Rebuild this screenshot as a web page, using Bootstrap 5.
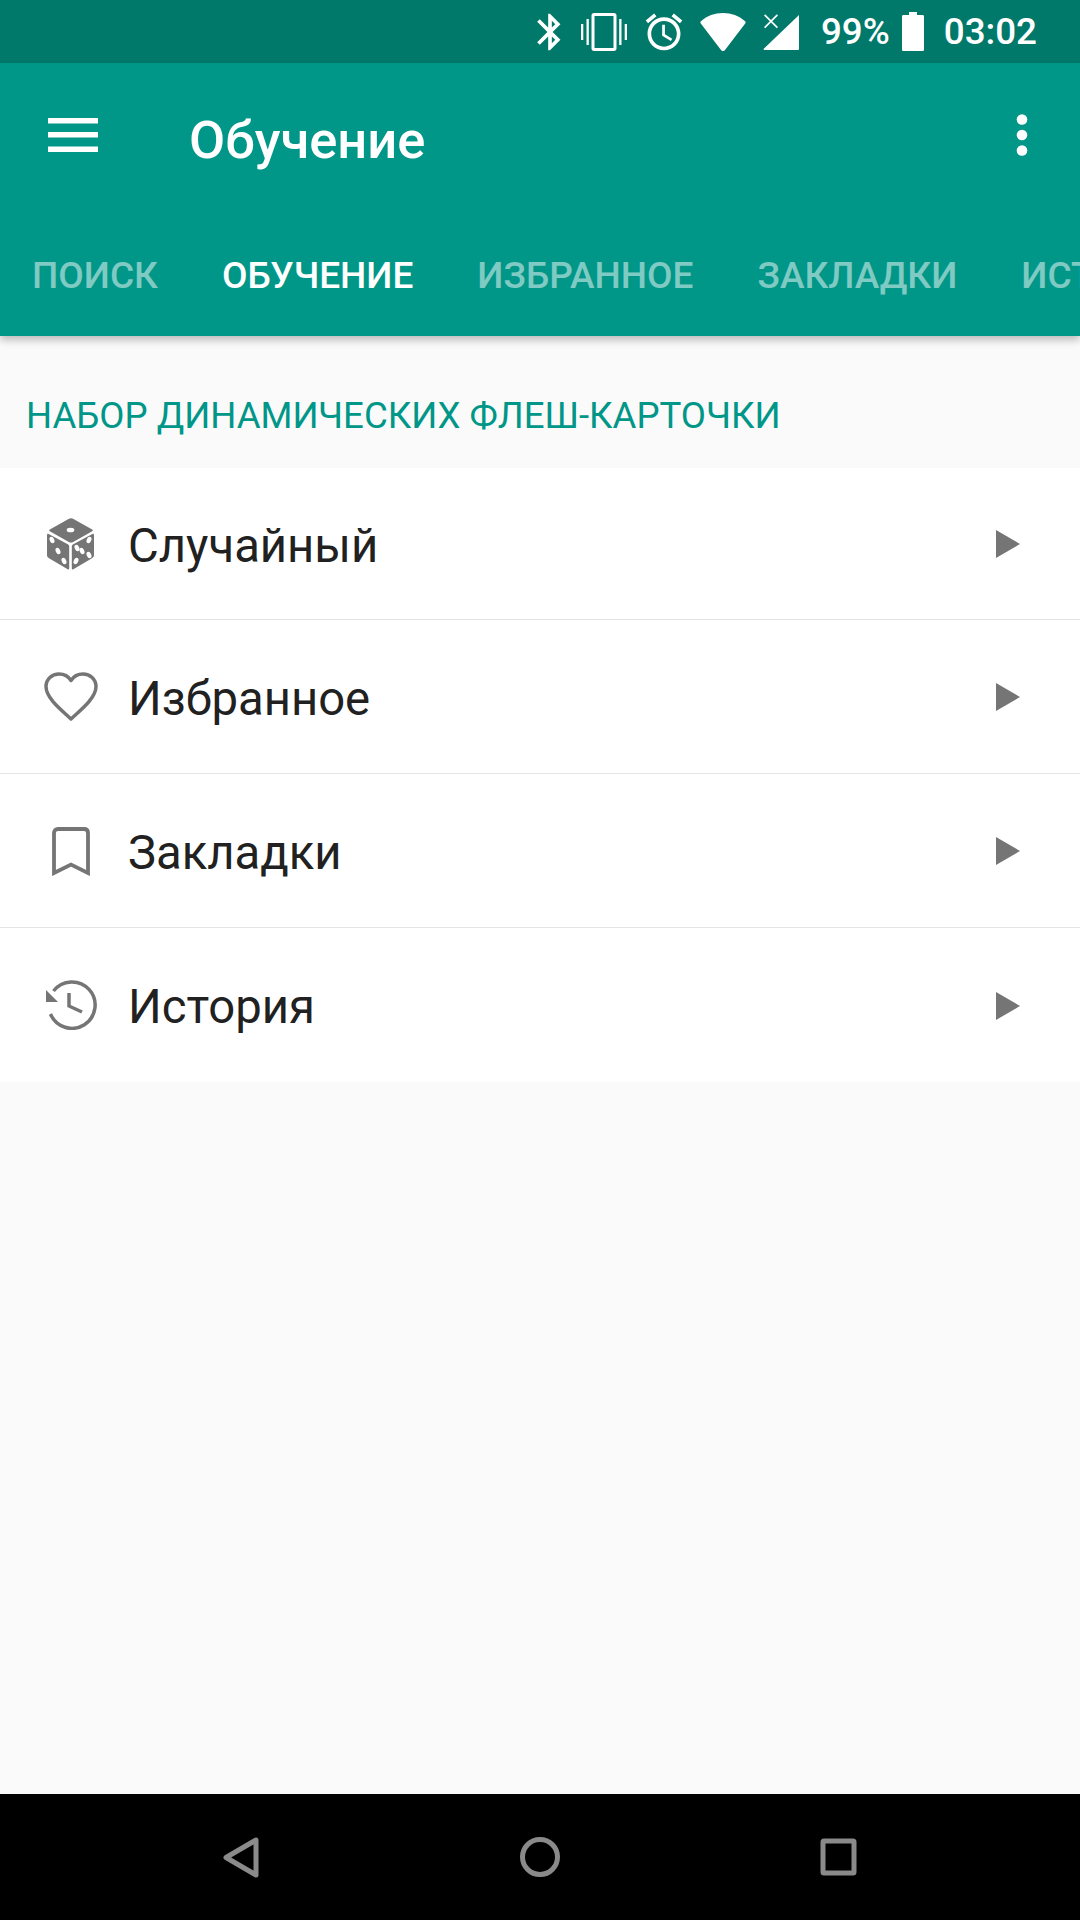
<!DOCTYPE html>
<html lang="ru">
<head>
    <meta charset="UTF-8">
    <meta name="viewport" content="width=device-width, initial-scale=1.0">
    <title>Обучение</title>
    <link href="https://cdn.jsdelivr.net/npm/bootstrap@5.3.0/dist/css/bootstrap.min.css" rel="stylesheet">
    <style>
        html, body { height: 100%; }
        body { font-family: Roboto, "Liberation Sans", sans-serif; background: #fafafa; color: #212121; overflow: hidden; }
        .phone-screen { width: 1080px; height: 1920px; }
        .status-strip { height: 63px; background: #00796b; color: #fff; font-size: 36.75px; font-weight: 500; padding-right: 43px; }
        .status-strip svg { fill: #fff; display: block; }
        .app-header { height: 273px; background: #009688; color: #fff; box-shadow: 0 4px 8px rgba(0,0,0,.25); position: relative; z-index: 2; }
        .title-row { height: 154px; padding: 0 52px 10px 48px; }
        .title-text { font-size: 52.5px; font-weight: 500; margin-left: 91px; margin-top: 10px; line-height: 1; }
        .tab-strip { height: 119px; padding-left: 32px; gap: 64px; overflow: hidden; }
        .tab-item { font-size: 37px; font-weight: 500; color: rgba(255,255,255,.5); white-space: nowrap; line-height: 1; margin-top: -3px; }
        .tab-item.active-tab { color: #fff; }
        .section-title { height: 132px; padding: 29px 0 0 26px; color: #009688; font-size: 36.6px; line-height: 1; }
        .learn-list { --bs-list-group-border-radius: 0; --bs-list-group-border-color: #e4e4e4; }
        .learn-row { height: 154px; padding: 0 60px 0 0; font-size: 47.25px; color: #212121; }
        .learn-row:first-child { height: 152px; }
        .row-label { padding-top: 5px; }
        .row-icon { width: 128px; flex: none; }
        .row-icon svg { display: block; }
        .row-arrow { margin-top: 1px; }
        .nav-strip { height: 126px; background: #000; }
        .nav-strip svg { position: absolute; top: 0; left: 0; }
    </style>
</head>
<body>
<div class="phone-screen d-flex flex-column">
    <div class="status-strip d-flex align-items-center justify-content-end flex-shrink-0">
        <svg width="44" height="44" viewBox="0 0 24 24"><path d="M17.71 7.71L12 2h-1v7.59L6.41 5 5 6.41 10.59 12 5 17.59 6.41 19 11 14.41V22h1l5.71-5.71-4.3-4.29 4.3-4.29zM13 5.830l1.880 1.880L13 9.590V5.830zm1.880 10.460L13 18.170v-3.760l1.880 1.880z"/></svg>
        <svg width="46" height="38" viewBox="0 0 46 38" style="margin-left:9px"><rect x="0" y="11" width="2.300" height="16"/><rect x="5.500" y="6" width="2.300" height="26"/><rect x="38.200" y="6" width="2.300" height="26"/><rect x="43.700" y="11" width="2.300" height="16"/><path fill-rule="evenodd" d="M13 0h20c1.500 0 2.500 1 2.500 2.500v33c0 1.500-1 2.500-2.500 2.500H13c-1.500 0-2.500-1-2.500-2.500v-33C10.500 1 11.500 0 13 0zm.5 3v32h19V3z"/></svg>
        <svg width="44" height="44" viewBox="0 0 24 24" style="margin-left:15px"><path d="M22 5.720l-4.600-3.860-1.290 1.530 4.600 3.860L22 5.720zM7.880 3.390L6.600 1.860 2 5.710l1.290 1.530 4.590-3.850zM12.500 8H11v6l4.750 2.850.75-1.230-4-2.370V8zM12 4c-4.970 0-9 4.030-9 9s4.020 9 9 9c4.970 0 9-4.030 9-9s-4.030-9-9-9zm0 16c-3.870 0-7-3.130-7-7s3.130-7 7-7 7 3.130 7 7-3.130 7-7 7z"/></svg>
        <svg width="46" height="38" viewBox="0 0 46 38" style="margin-left:14px"><path d="M23 38c-1 0-1.600-.5-2.200-1.300L.8 10.500C0 9.500.3 8.500 1.200 7.900 7 3 14.500 0 23 0s16 3 21.800 7.900c.9.6 1.200 1.600.4 2.600L25.200 36.700C24.600 37.500 24 38 23 38z"/></svg>
        <svg width="36" height="36" viewBox="0 0 36 36" style="margin-left:17px"><path d="M36 1v33.500c0 1-.5 1.500-1.500 1.500H1l-.5-1z"/><path d="M1 3.500l1.200-1.200 5.800 5.800 5.800-5.800L15 3.500l-5.800 5.800 5.800 5.800-1.200 1.200L8 10.500l-5.800 5.800L1 15.100l5.800-5.800z" transform="translate(0 -2)"/></svg>
        <span style="margin-left:22px">99%</span>
        <svg width="22" height="39" viewBox="0 0 22 39" style="margin-left:12px"><path d="M7 0h8v3h5.500c1 0 1.500.5 1.500 1.500v33c0 1-.5 1.500-1.500 1.500h-19c-1 0-1.500-.5-1.500-1.500v-33C0 3.500.5 3 1.500 3H7z"/></svg>
        <span style="margin-left:20px">03:02</span>
    </div>
    <div class="app-header flex-shrink-0">
        <div class="title-row d-flex align-items-center">
            <svg width="50" height="34" viewBox="0 0 50 34" fill="#fff" class="flex-shrink-0"><rect y="0" width="50" height="5.500"/><rect y="14" width="50" height="5.500"/><rect y="28.500" width="50" height="5.500"/></svg>
            <div class="title-text flex-grow-1">Обучение</div>
            <svg width="12" height="42" viewBox="0 0 12 42" fill="#fff" class="flex-shrink-0"><circle cx="6" cy="5.500" r="5.300"/><circle cx="6" cy="21" r="5.300"/><circle cx="6" cy="36.500" r="5.300"/></svg>
        </div>
        <div class="tab-strip d-flex align-items-center">
            <div class="tab-item">ПОИСК</div>
            <div class="tab-item active-tab">ОБУЧЕНИЕ</div>
            <div class="tab-item">ИЗБРАННОЕ</div>
            <div class="tab-item">ЗАКЛАДКИ</div>
            <div class="tab-item">ИСТОРИЯ</div>
        </div>
    </div>
    <div class="section-title d-flex align-items-center flex-shrink-0">НАБОР ДИНАМИЧЕСКИХ ФЛЕШ-КАРТОЧКИ</div>
    <div class="list-group list-group-flush learn-list flex-shrink-0">
        <div class="list-group-item learn-row d-flex align-items-center">
            <div class="row-icon">
                <svg width="48" height="52" viewBox="0 0 48 52" style="margin-left:47px"><path d="M21.500 1 2.800 11.500c-.8.5-.8 1.200 0 1.700l19 10.800c1.200.7 3.200.7 4.400 0l19-10.800c.8-.5.8-1.200 0-1.700L26.500 1c-1.500-.9-3.500-.9-5 0z" fill="#757575"/><path d="M0 17.500V37c0 1.500.8 2.500 2 3.200l18.700 11c1 .5 1.500.2 1.500-.9V28.500c0-1-.5-1.800-1.400-2.300L1.600 16C.6 15.500 0 16 0 17.500z" fill="#757575"/><path d="M47 17.500V37c0 1.500-.8 2.500-2 3.200l-18.700 11c-1 .5-1.500.2-1.500-.9V28.500c0-1 .5-1.800 1.400-2.300L45.400 16c1-.5 1.600 0 1.600 1.500z" fill="#757575"/><g fill="#fff"><ellipse cx="23.500" cy="12" rx="3.800" ry="2.300"/><ellipse cx="5" cy="22" rx="2.200" ry="3.400" transform="rotate(-25 5 22)"/><ellipse cx="11" cy="33" rx="2.200" ry="3.400" transform="rotate(-25 11 33)"/><ellipse cx="17" cy="43" rx="2.200" ry="3.400" transform="rotate(-25 17 43)"/><ellipse cx="42" cy="22" rx="2.200" ry="3.400" transform="rotate(25 42 22)"/><ellipse cx="30" cy="30" rx="2.200" ry="3.400" transform="rotate(-25 30 30)"/><ellipse cx="35" cy="33" rx="2.200" ry="3.400" transform="rotate(-25 35 33)"/><ellipse cx="42" cy="37" rx="2.200" ry="3.400" transform="rotate(-25 42 37)"/><ellipse cx="29" cy="43" rx="2.200" ry="3.400" transform="rotate(25 29 43)"/></g></svg>
            </div>
            <div class="row-label flex-grow-1">Случайный</div>
            <svg class="row-arrow" width="24" height="30" viewBox="0 0 24 30" fill="#757575"><path d="M0 1v28l24-14z"/></svg>
        </div>
        <div class="list-group-item learn-row d-flex align-items-center">
            <div class="row-icon">
                <svg width="54" height="50" viewBox="0 0 54 50" fill="none" stroke="#757575" stroke-width="3.500" stroke-linejoin="round" style="margin-left:44px"><path d="M27 47C20 40 2 27 2 14.500 2 7 8 2 15 2c5 0 9.500 2.500 12 6.500C29.500 4.500 34 2 39 2c7 0 13 5 13 12.500C52 27 34 40 27 47z"/></svg>
            </div>
            <div class="row-label flex-grow-1">Избранное</div>
            <svg class="row-arrow" width="24" height="30" viewBox="0 0 24 30" fill="#757575"><path d="M0 1v28l24-14z"/></svg>
        </div>
        <div class="list-group-item learn-row d-flex align-items-center">
            <div class="row-icon">
                <svg width="38" height="49" viewBox="0 0 38 49" fill="none" stroke="#757575" stroke-width="3.800" style="margin:2px 0 0 52px"><path d="M2 46V6c0-2.500 1.500-4 4-4h26c2.500 0 4 1.500 4 4v40L19 37.500z"/></svg>
            </div>
            <div class="row-label flex-grow-1">Закладки</div>
            <svg class="row-arrow" width="24" height="30" viewBox="0 0 24 30" fill="#757575"><path d="M0 1v28l24-14z"/></svg>
        </div>
        <div class="list-group-item learn-row d-flex align-items-center border-bottom-0">
            <div class="row-icon">
                <svg width="52" height="50" viewBox="0 0 52 50" style="margin-left:46px"><g fill="none" stroke="#757575" stroke-width="3.500"><path d="M7.500 11A23.200 23.200 0 1 1 4.500 34"/><path d="M23 13v13l13 6"/></g><path d="M0 10v12h12z" fill="#757575"/></svg>
            </div>
            <div class="row-label flex-grow-1">История</div>
            <svg class="row-arrow" width="24" height="30" viewBox="0 0 24 30" fill="#757575"><path d="M0 1v28l24-14z"/></svg>
        </div>
    </div>
    <div class="flex-grow-1"></div>
    <div class="nav-strip position-relative flex-shrink-0">
        <svg width="1080" height="126" viewBox="0 0 1080 126" fill="none" stroke="#8a8a8a" stroke-width="5" stroke-linejoin="round"><path d="M256 46v35L226 63.500z"/><circle cx="540" cy="63" r="17.500"/><rect x="823" y="47" width="31" height="32" rx="1"/></svg>
    </div>
</div>
</body>
</html>
